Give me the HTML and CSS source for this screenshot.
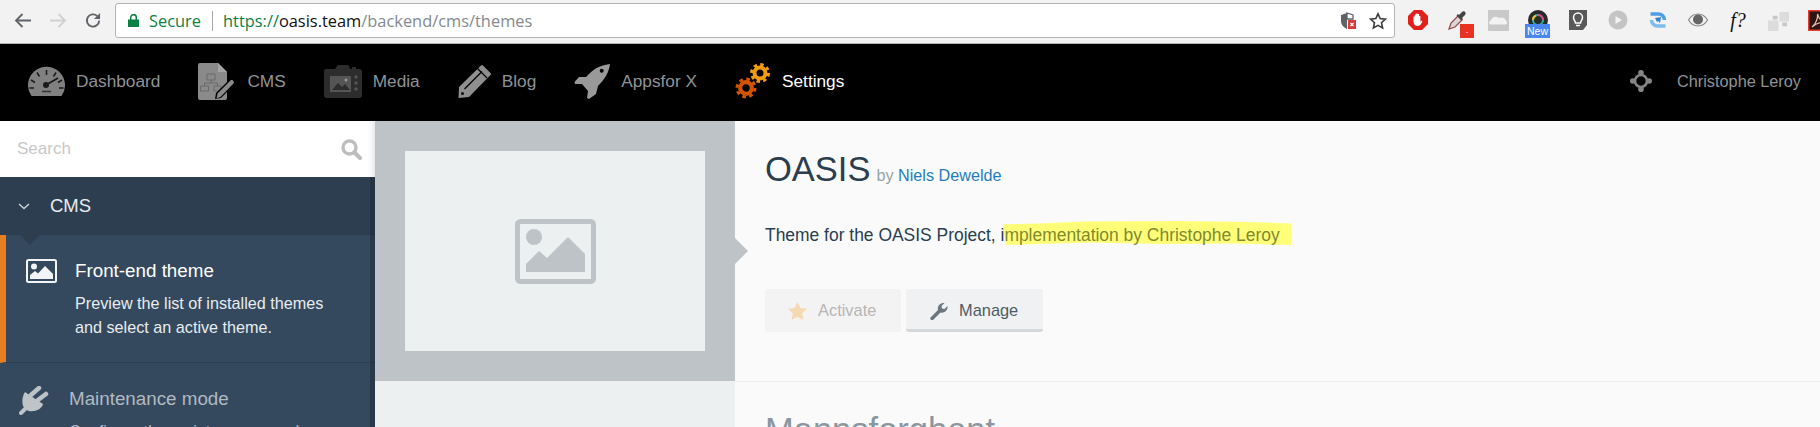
FILE: index.html
```html
<!DOCTYPE html>
<html lang="en">
<head>
<meta charset="utf-8">
<title>OASIS theme</title>
<link rel="stylesheet" href="styles.css">
</head>
<body>
<header class="chrome">
  <div class="chrome-nav">
    <svg class="cb" viewBox="0 0 18 16"><path d="M17 8H2M8.500 1.500 2 8l6.500 6.500" fill="none" stroke="#5f6368" stroke-width="1.800"/></svg>
    <svg class="cb" viewBox="0 0 18 16"><path d="M1 8h15M9.500 1.500 16 8l-6.500 6.500" fill="none" stroke="#d0d0d0" stroke-width="1.800"/></svg>
    <svg class="cb" viewBox="0 0 18 18"><path d="M15.500 9a6.500 6.500 0 1 1-2-4.700" fill="none" stroke="#5f6368" stroke-width="2"/><path d="M16.500 1v6.500H10z" fill="#5f6368"/></svg>
  </div>
  <div class="omnibox">
    <svg class="lock" viewBox="0 0 11 13"><path d="M0 5.500h11V13H0z" fill="#0b8043"/><path d="M2.700 6V3.500a2.800 2.800 0 0 1 5.600 0V6" fill="none" stroke="#0b8043" stroke-width="1.500"/></svg>
    <span class="secure">Secure</span>
    <span class="omni-sep"></span>
    <span class="url"><span class="url-g">https://</span><span class="url-k">oasis.team</span>/backend/cms/themes</span>
    <span class="omni-fill"></span>
    <svg class="shield" viewBox="0 0 16 18"><path d="M7 1 1 3v6c0 4 3 6.500 6 8z" fill="#5f6368"/><path d="M7 1l6 2v4H7z" fill="none" stroke="#5f6368" stroke-width="1.300"/><path d="M8 8h8v9H8z" fill="#d93a3a"/><path d="M10.500 11l3 3m0-3-3 3" stroke="#fff" stroke-width="1.200"/></svg>
    <svg class="star" viewBox="0 0 18 18"><path d="m9 1.800 2.200 4.800 5.200.6-3.900 3.500 1.100 5.200L9 13.300l-4.600 2.600 1.100-5.200L1.600 7.200l5.200-.6z" fill="none" stroke="#3c3c3c" stroke-width="1.600"/></svg>
  </div>
  <div class="exts">
    <div class="ext"><svg class="e20" viewBox="0 0 20 20"><path d="M6 0h8l6 6v8l-6 6H6l-6-6V6z" fill="#e0201b"/><path d="M5.500 11V6.500h1.300V10V4.500h1.400V10V3.500h1.500V10V4h1.400v6.500V6h1.300v6l1-1.500 1 .6c-1 2.700-2 5-4.500 5-3 0-4.400-1.500-4.400-5z" fill="#fff"/></svg></div>
    <div class="ext"><svg class="e20" viewBox="0 0 20 20"><path d="M1 19l2-6 7-7 4 4-7 7z" fill="#d8d8d8" stroke="#a04a4a" stroke-width="1.300"/><path d="M11 5l3-3c2-2 5 1 3 3l-3 3 1 1-1.500 1.500-5-5L10 4z" fill="#444"/></svg><span class="badge-red">.</span></div>
    <div class="ext"><svg class="e21" viewBox="0 0 21 21"><path d="M0 0h21v21H0z" fill="#c9c9c9"/><path d="M2 14.500c-1.500-1-1-4 1-4 .5-3 5-5 8-2.500 3-1.500 7 0 7 3 1.500.5 1.500 3.500-.5 3.500z" fill="#f2f2f2"/></svg></div>
    <div class="ext"><svg class="e20" viewBox="0 0 20 20"><circle cx="10" cy="10" r="10" fill="#2a2a2a"/><circle cx="10" cy="10" r="5" fill="none" stroke="#29b6a8" stroke-width="2"/><path d="M10 5a5 5 0 0 1 5 5" fill="none" stroke="#e0447a" stroke-width="2"/><path d="M5 10a5 5 0 0 1 3-4.500" fill="none" stroke="#e5c030" stroke-width="2"/></svg><span class="badge-new">New</span></div>
    <div class="ext"><svg class="e20" viewBox="0 0 20 20"><path d="M1 0h18v15l-4 5H1z" fill="#595959"/><path d="M7.500 13c0-2-2-3-2-5.500a4.500 4.500 0 0 1 9 0C14.500 10 12.500 11 12.500 13zM8 15.500h4" fill="none" stroke="#fff" stroke-width="1.500"/></svg></div>
    <div class="ext"><svg class="e20" viewBox="0 0 20 20"><circle cx="10" cy="10" r="9.500" fill="#c4c4c4"/><path d="M7.500 6v8l6.500-4z" fill="#f2f2f2"/></svg></div>
    <div class="ext"><svg class="e18" viewBox="0 0 18 18"><path d="M1.500 3h8a6 6 0 0 1 6 6" fill="none" stroke="#4f9fe6" stroke-width="3.500"/><path d="M16.500 15h-8a6 6 0 0 1-6-6" fill="none" stroke="#7dbcee" stroke-width="3.500"/><path d="M6 7l6-1-1 6-2-2-1 1z" fill="#2f86d6"/></svg></div>
    <div class="ext"><svg class="e20" viewBox="0 0 20 14"><path d="M.5 7C3 2.500 6 1 10 1s7 1.500 9.500 6C17 11.500 14 13 10 13S3 11.500.5 7z" fill="none" stroke="#8a8a8a" stroke-width="1.200"/><circle cx="10" cy="6.500" r="5" fill="#666"/></svg></div>
    <div class="ext"><span class="fq">f?</span></div>
    <div class="ext"><svg class="e21" viewBox="0 0 22 22"><path d="M0 11h11v11H0zM12 2h10v10H12z" fill="#dcdcdc"/><path d="M5 6h5v4H5zM15 13h5v4h-5z" fill="#c8c8c8"/></svg></div>
    <div class="ext"><svg class="e21" viewBox="0 0 21 21"><path d="M0 0h21v21H0z" fill="#e23b2e"/><path d="M1.500 1.500h18v18h-18z" fill="#2b1613"/><path d="M4 17c4-3 6-9 5.500-13 1.500 4 2 6 7 8-4 0-8 1-12.500 5z" fill="none" stroke="#f0c0b8" stroke-width="1.300"/></svg></div>
  </div>
</header>

<nav class="topnav">
  <a class="nav-item">
    <svg class="ni-dash" viewBox="0 0 37 30"><path d="M3.500 30A18.500 18.500 0 1 1 33.500 30z" fill="#808080"/><path d="M18.500 4v5M9 6.500l2.500 4M28 6.500l-2.500 4M3 14l4 2.500M34 14l-4 2.500M1.500 22H6M35.500 22H31" stroke="#1a1a1a" stroke-width="1.500"/><path d="M18 19 30 12" stroke="#1a1a1a" stroke-width="1.800"/><circle cx="18" cy="19" r="3" fill="#1a1a1a"/><path d="M14 25.500h9" stroke="#333" stroke-width="1.500"/></svg>
    <span>Dashboard</span>
  </a>
  <a class="nav-item">
    <svg class="ni-cms" viewBox="0 0 38 37"><path d="M2 0h18l9 9v26a2 2 0 0 1-2 2H2a2 2 0 0 1-2-2V2a2 2 0 0 1 2-2z" fill="#8a8a8a"/><path d="M20 0v9h9z" fill="#a5a5a5"/><path d="M9 11h8v6H9zM2.500 23h8v5h-8zM16 23h7v5h-7zM13 17v3M6.500 23v-3h13v3" fill="none" stroke="#6a6a6a" stroke-width="1"/><path d="M17 36l1-6 14-14c2-2 7 2 5 5L23 35z" fill="#000"/><path d="M18.500 35.500l1-5 13-13c1.500-1.500 4.500 1 3 3l-13 13.500z" fill="#8a8a8a"/></svg>
    <span>CMS</span>
  </a>
  <a class="nav-item">
    <svg class="ni-media" viewBox="0 0 38 33"><path d="M2 4h9l2-3c.5-1 1-1 2-1h8c1 0 1.500 0 2 1l1 3h2V2h4v2h3a3 3 0 0 1 3 3v23a3 3 0 0 1-3 3H3a3 3 0 0 1-3-3V6a2 2 0 0 1 2-2z" fill="#2d2d2d"/><path d="M6 11h21v16H6z" fill="#555"/><path d="M8 25l6-7 4 4 3-3 5 6z" fill="#2d2d2d"/><circle cx="22" cy="15" r="1.500" fill="#9a9a9a"/><circle cx="32" cy="12" r="1.700" fill="#555"/><circle cx="32" cy="18" r="1.700" fill="#555"/><circle cx="32" cy="24" r="1.700" fill="#555"/></svg>
    <span>Media</span>
  </a>
  <a class="nav-item">
    <svg class="ni-blog" viewBox="0 0 33 33"><path d="M25 .5l7.500 7.500q1 1 0 2L11 32 .5 33 1 22 23 .5q1-1 2 0z" fill="#8f8f8f"/><path d="M6.500 24 24 6.500M19.500 3.500l9.500 9.500" stroke="#000" stroke-width="1.300"/><circle cx="4.500" cy="28.500" r="1.500" fill="#000"/></svg>
    <span>Blog</span>
  </a>
  <a class="nav-item">
    <svg class="ni-apps" viewBox="0 0 36 35"><path d="M36 0C29 1 22 3 16 9l-4 4H5L.5 18l.5 2h7l6 7-1 7 2 1 7-5 2-8c7-7 11-14 12-22z" fill="#999"/><circle cx="27.700" cy="6.700" r="2" fill="#000"/></svg>
    <span>Appsfor X</span>
  </a>
  <a class="nav-item nav-active">
    <svg class="ni-gears" viewBox="0 0 36 36"><g fill="none" stroke="#f39c12"><circle cx="25" cy="10" r="5.500" stroke-width="4"/><circle cx="25" cy="10" r="8.500" stroke-width="3" stroke-dasharray="3.400 3.270"/></g><g fill="none" stroke="#d35400"><circle cx="11" cy="25" r="5.800" stroke-width="4.200"/><circle cx="11" cy="25" r="9" stroke-width="3" stroke-dasharray="3.600 3.470"/></g></svg>
    <span>Settings</span>
  </a>
  <span class="nav-fill"></span>
  <svg class="ni-move" viewBox="0 0 22 22"><circle cx="11" cy="11" r="6" fill="none" stroke="#858585" stroke-width="2.600"/><circle cx="11" cy="2.800" r="2.800" fill="#858585"/><circle cx="11" cy="19.200" r="2.800" fill="#858585"/><circle cx="2.800" cy="11" r="2.800" fill="#858585"/><circle cx="19.200" cy="11" r="2.800" fill="#858585"/></svg>
  <span class="nav-user">Christophe Leroy</span>
</nav>

<div class="page">
  <aside class="sidebar">
    <div class="side-search">
      <span class="search-text">Search</span>
      <svg class="search-ico" viewBox="0 0 21 21"><circle cx="8.500" cy="8.500" r="6.500" fill="none" stroke="#bdbdbd" stroke-width="3.400"/><path d="M13.500 13.500 19 19" stroke="#bdbdbd" stroke-width="4" stroke-linecap="round"/></svg>
    </div>
    <div class="side-head">
      <svg class="chev" viewBox="0 0 12 7"><path d="M1 1l5 4.500L11 1" fill="none" stroke="#c9d0d6" stroke-width="1.500"/></svg>
      <span>CMS</span>
    </div>
    <div class="side-item side-active">
      <span class="notch"></span>
      <div class="side-ico">
        <svg class="ic-image" viewBox="0 0 31 24"><rect x="1" y="1" width="29" height="22" rx="1.500" fill="none" stroke="#f2f4f5" stroke-width="2"/><circle cx="8" cy="7.500" r="3" fill="#f2f4f5"/><path d="M4 20v-4l5-4 3 2.500L19 7l8 8v5z" fill="#f2f4f5"/></svg>
      </div>
      <div class="side-body">
        <div class="side-title">Front-end theme</div>
        <div class="side-desc">Preview the list of installed themes and select an active theme.</div>
      </div>
    </div>
    <div class="side-item">
      <div class="side-ico">
        <svg class="ic-plug" viewBox="0 0 30 29"><path d="M6 23l-4 4" stroke="#bdc3c7" stroke-width="4" stroke-linecap="round"/><path d="M6 6 24 18c-1 6-12 10-18 5C2 19 3 10 6 6z" fill="#bdc3c7"/><path d="M12 9l8-7M19 14l8-6" stroke="#bdc3c7" stroke-width="4.500" stroke-linecap="round"/></svg>
      </div>
      <div class="side-body">
        <div class="side-title side-muted">Maintenance mode</div>
        <div class="side-desc side-muted">Configure the maintenance mode page and toggle the setting.</div>
      </div>
    </div>
    <span class="side-edge"></span>
  </aside>

  <main class="main">
    <section class="theme-row">
      <div class="thumb">
        <div class="thumb-img">
          <svg class="ic-placeholder" viewBox="0 0 81 65"><rect x="2.500" y="2.500" width="76" height="60" rx="3" fill="none" stroke="#bdc3c7" stroke-width="5"/><circle cx="19" cy="18" r="8" fill="#bdc3c7"/><path d="M11 53v-8l13-13 8 7 21-21 17 17v18z" fill="#bdc3c7"/></svg>
        </div>
        <span class="thumb-arrow"></span>
      </div>
      <div class="info">
        <h1 class="title">OASIS<small class="by">by <a class="by-link">Niels Dewelde</a></small></h1>
        <p class="desc"><span class="hl-mark"></span><span class="desc-text">Theme for the OASIS Project, i<span class="hl-text">mplementation by Christophe Leroy</span></span></p>
        <div class="actions">
          <button class="btn btn-off">
            <svg class="b-ico" viewBox="0 0 19 18"><path d="m9.500 0 2.900 6 6.600.8-4.800 4.500 1.200 6.600-5.900-3.200-5.900 3.200 1.200-6.600L0 6.800 6.600 6z" fill="#f5d9b3"/></svg>
            Activate
          </button>
          <button class="btn btn-manage">
            <svg class="b-ico" viewBox="0 0 18 18"><path d="M1 15.500 8.500 8C7.500 4.500 10.500.500 15 1l-3 3 .5 2.500L15 7l3-3c.5 4.500-3.500 7.500-7 6.500l-7.500 7.500q-1 .800-2 0-1.300-1.500-.5-2.500z" fill="#6b7680"/></svg>
            Manage
          </button>
        </div>
      </div>
    </section>
    <section class="theme-row-next">
      <div class="next-left"></div>
      <div class="next-right"><h2 class="next-title">Mannsforghent</h2></div>
    </section>
  </main>
</div>
</body>
</html>
```

FILE: styles.css
```css
* { box-sizing: border-box; }
html, body { margin: 0; padding: 0; }
body {
  width: 1820px;
  height: 427px;
  overflow: hidden;
  font-family: "Liberation Sans", Arial, sans-serif;
  background: #fafafa;
}

/* browser toolbar */
.chrome {
  height: 44px;
  display: flex;
  background: #f2f2f2;
  border-bottom: 1px solid #b5b5b5;
  overflow: hidden;
}
.chrome-nav {
  width: 115px;
  flex: none;
  display: flex;
  align-items: center;
  gap: 17px;
  padding: 0 0 2px 14px;
}
.cb { width: 18px; height: 17px; flex: none; }
.omnibox {
  width: 1280px;
  height: 35px;
  margin-top: 3px;
  flex: none;
  display: flex;
  align-items: center;
  padding: 0 7px 0 12px;
  background: #fff;
  border: 1px solid #b3b3b3;
  border-radius: 3px;
  font-family: "Open Sans", "Noto Sans", sans-serif;
  font-size: 16.400px;
}
.lock { width: 11px; height: 13px; flex: none; }
.secure { margin-left: 10px; color: #0b8043; }
.omni-sep { width: 1px; height: 20px; margin: 0 10px 0 11px; background: #a8a8a8; }
.url { color: #828a90; }
.url-g { color: #0b8043; }
.url-k { color: #111; }
.omni-fill { flex: 1; }
.shield { width: 16px; height: 18px; }
.star { width: 18px; height: 18px; margin-left: 13px; }
.exts {
  flex: none;
  display: flex;
  margin-left: 3px;
}
.ext {
  position: relative;
  width: 40px;
  height: 40px;
  flex: none;
  display: flex;
  justify-content: center;
  padding-top: 10px;
}
.e20 { width: 20px; height: 20px; }
.e21 { width: 21px; height: 21px; }
.e18 { width: 18px; height: 18px; margin-top: 1px; }
.badge-red {
  position: absolute;
  left: 22px;
  top: 24px;
  width: 14px;
  height: 14px;
  background: #ea3223;
  color: #fff;
  font-size: 9px;
  line-height: 12px;
  text-align: center;
}
.badge-new {
  position: absolute;
  left: 7px;
  top: 24px;
  width: 25px;
  height: 14px;
  background: #4a88f0;
  color: #fff;
  font-size: 10.500px;
  line-height: 15px;
  text-align: center;
}
.fq {
  font-family: "Liberation Serif", serif;
  font-style: italic;
  font-size: 20px;
  line-height: 20px;
  color: #111;
}

/* top nav */
.topnav {
  height: 77px;
  display: flex;
  align-items: center;
  gap: 38px;
  padding: 0 0 3px 28px;
  background: #000;
  color: #8f9396;
  font-size: 17.250px;
}
.nav-item {
  display: flex;
  align-items: center;
  gap: 11px;
}
.nav-active { color: #fff; }
.ni-dash { width: 37px; height: 30px; }
.ni-cms { width: 38px; height: 37px; }
.ni-media { width: 38px; height: 33px; }
.ni-blog { width: 33px; height: 33px; }
.ni-apps { width: 36px; height: 35px; }
.ni-gears { width: 36px; height: 36px; }
.nav-fill { flex: 1; }
.ni-move { width: 22px; height: 22px; margin-right: -13px; }
.nav-user { margin-right: 19px; font-size: 16.300px; }

/* page */
.page {
  height: 306px;
  display: flex;
  overflow: hidden;
}

/* sidebar */
.sidebar {
  position: relative;
  width: 375px;
  flex: none;
  background: #34495e;
}
.side-search {
  height: 56px;
  display: flex;
  align-items: center;
  justify-content: space-between;
  padding: 0 13px 0 17px;
  background: #fff;
  box-shadow: inset -8px 0 6px -6px #e2e2e2;
}
.search-text { font-size: 17px; color: #c8c8c8; }
.search-ico { width: 21px; height: 21px; }
.side-head {
  height: 58px;
  display: flex;
  align-items: center;
  gap: 20px;
  padding-left: 18px;
  background: #2d3e50;
  color: #e8ecef;
  font-size: 18.500px;
}
.chev { width: 12px; height: 7px; }
.side-item {
  position: relative;
  display: flex;
  padding: 24px 30px 24px 19px;
  border-bottom: 1px solid #2d4053;
}
.side-active {
  border-left: 6px solid #e67e22;
  height: 128px;
}
.notch {
  position: absolute;
  left: 14px;
  top: 0;
  border: 10px solid transparent;
  border-top-color: #2d3e50;
  border-bottom: 0;
}
.side-ico { width: 50px; flex: none; }
.ic-image { display: block; width: 31px; height: 24px; margin-left: 1px; }
.ic-plug { display: block; width: 30px; height: 29px; margin-top: -1px; }
.side-title {
  font-size: 18.800px;
  line-height: 24px;
  color: #fff;
}
.side-desc {
  margin-top: 8px;
  font-size: 16.200px;
  line-height: 24px;
  color: #e8ecef;
}
.side-muted { color: #b1b9c1; }
.side-edge {
  position: absolute;
  left: 370px;
  top: 56px;
  bottom: 0;
  width: 5px;
  background: rgba(20, 30, 40, 0.35);
}

/* main */
.main { flex: 1; min-width: 0; }
.theme-row { height: 260px; display: flex; }
.thumb {
  position: relative;
  width: 360px;
  flex: none;
  padding: 30px;
  background: #bdc3c7;
}
.thumb-img {
  height: 200px;
  display: flex;
  align-items: center;
  justify-content: center;
  background: #ecf0f1;
}
.ic-placeholder { width: 81px; height: 65px; }
.thumb-arrow {
  position: absolute;
  left: 360px;
  top: 117px;
  border: 13px solid transparent;
  border-left-color: #bdc3c7;
  border-right: 0;
}
.info { flex: 1; padding: 28px 0 0 30px; }
.title {
  margin: 0;
  font-size: 34.500px;
  font-weight: 400;
  line-height: 40px;
  color: #2b3e50;
}
.by { margin-left: 6px; font-size: 16.200px; color: #95a5a6; }
.by-link { color: #1f7fbb; }
.desc {
  position: relative;
  margin: 28px 0 0;
  font-size: 17.450px;
  line-height: 24px;
  color: #2b3e50;
}
.desc-text { position: relative; }
.hl-text { color: #7f8a30; }
.hl-mark {
  position: absolute;
  left: 238px;
  top: -2px;
  width: 288px;
  height: 24px;
  background: #ffff78;
  clip-path: polygon(0 14%, 12% 10%, 28% 2%, 60% 0, 85% 4%, 100% 10%, 100% 100%, 80% 94%, 55% 96%, 30% 90%, 12% 96%, 1% 100%);
}
.actions { display: flex; gap: 5px; margin-top: 42px; }
.btn {
  height: 43px;
  display: flex;
  align-items: center;
  gap: 11px;
  padding: 0 23px;
  border: 0;
  border-radius: 3px;
  font-family: inherit;
  font-size: 16.400px;
}
.b-ico { width: 19px; height: 18px; }
.btn-off { width: 136px; background: #f3f3f3; color: #b6b6b6; }
.btn-manage {
  width: 137px;
  background: #eff1f3;
  border-bottom: 3px solid #d5d8db;
  color: #4f5b66;
  padding-top: 3px;
}
.theme-row-next {
  display: flex;
  height: 46px;
  border-top: 1px solid #eeeeee;
}
.next-left { width: 360px; flex: none; background: #ecf0f1; }
.next-right { flex: 1; padding: 28px 0 0 30px; }
.next-title {
  margin: 0;
  font-size: 34.500px;
  font-weight: 400;
  line-height: 40px;
  color: #8a96a0;
}
```
